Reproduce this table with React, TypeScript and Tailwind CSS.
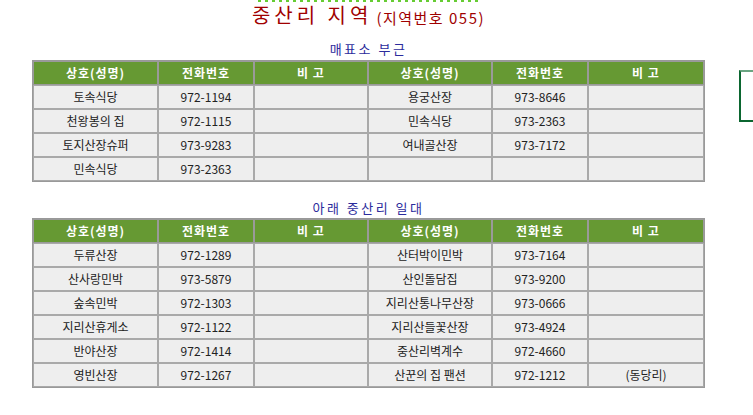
const FONT = '"Noto Sans CJK KR", "Noto Sans", sans-serif';

type Row = [string, string, string];

const near: { left: Row; right: Row }[] = [
  { left: ["토속식당", "972-1194", ""], right: ["용궁산장", "973-8646", ""] },
  { left: ["천왕봉의 집", "972-1115", ""], right: ["민속식당", "973-2363", ""] },
  { left: ["토지산장슈퍼", "973-9283", ""], right: ["여내골산장", "973-7172", ""] },
  { left: ["민속식당", "973-2363", ""], right: ["", "", ""] },
];

const below: { left: Row; right: Row }[] = [
  { left: ["두류산장", "972-1289", ""], right: ["산터박이민박", "973-7164", ""] },
  { left: ["산사랑민박", "973-5879", ""], right: ["산인돌담집", "973-9200", ""] },
  { left: ["숲속민박", "972-1303", ""], right: ["지리산통나무산장", "973-0666", ""] },
  { left: ["지리산휴게소", "972-1122", ""], right: ["지리산들꽃산장", "973-4924", ""] },
  { left: ["반야산장", "972-1414", ""], right: ["중산리벽계수", "972-4660", ""] },
  { left: ["영빈산장", "972-1267", ""], right: ["산꾼의 집 팬션", "972-1212", "(동당리)"] },
];

function Cells({ row }: { row: Row }) {
  return (
    <>
      {row.map((c, i) => (
        <td
          key={i}
          className="h-[24px] border border-[#a9a9a9] bg-[#eeeeee] p-0 text-center text-[12px] leading-none text-[#222]"
        >
          {c}
        </td>
      ))}
    </>
  );
}

function Header() {
  const cols = ["상호(성명)", "전화번호", "비 고", "상호(성명)", "전화번호", "비 고"];
  return (
    <tr>
      {cols.map((c, i) => (
        <th
          key={i}
          className="h-[24px] border border-[#9a9a9a] bg-[#669933] p-0 text-center text-[12px] font-bold leading-none tracking-[1px] text-white"
        >
          {c}
        </th>
      ))}
    </tr>
  );
}

function DirTable({ rows }: { rows: { left: Row; right: Row }[] }) {
  return (
    <table className="w-[671px] table-fixed border-separate border-spacing-0 border border-[#999]">
      <colgroup>
        <col className="w-[125px]" />
        <col className="w-[96px]" />
        <col className="w-[114px]" />
        <col className="w-[124px]" />
        <col className="w-[96px]" />
        <col className="w-[116px]" />
      </colgroup>
      <thead>
        <Header />
      </thead>
      <tbody>
        {rows.map((r, i) => (
          <tr key={i}>
            <Cells row={r.left} />
            <Cells row={r.right} />
          </tr>
        ))}
      </tbody>
    </table>
  );
}

export default function App() {
  return (
    <div className="relative h-[415px] w-[753px] overflow-hidden bg-white" style={{ fontFamily: FONT }}>
      {/* dotted rule left over from the block above */}
      <svg className="absolute left-[258px] top-0" width="222" height="3">
        <line x1="0" y1="1" x2="222" y2="1" stroke="#66cc33" strokeWidth="2" strokeDasharray="3 4" />
      </svg>

      <div className="ml-[33px] flex w-[671px] flex-col items-center">
        <div className="mt-[1px] flex h-[24px] items-end text-[#a00000]">
          <span className="text-[20px] leading-none tracking-[4px]">중산리 지역</span>
          <span className="ml-[4px] text-[15px] leading-none tracking-[1.5px]">(지역번호 055)</span>
        </div>

        <div className="mt-[17px] h-[18px] text-[13px] leading-none tracking-[2.5px] text-[#2b2b9c]">매표소 부근</div>
        <DirTable rows={near} />

        <div className="mt-[19px] h-[17px] text-[13px] leading-none tracking-[2.5px] text-[#2b2b9c]">아래 중산리 일대</div>
        <DirTable rows={below} />
      </div>

      {/* small framed box at the right edge */}
      <div className="absolute left-[739px] top-[70px] h-[52px] w-[20px] border-2 border-[#0b6630] border-t-[#6aa582]" />
    </div>
  );
}
